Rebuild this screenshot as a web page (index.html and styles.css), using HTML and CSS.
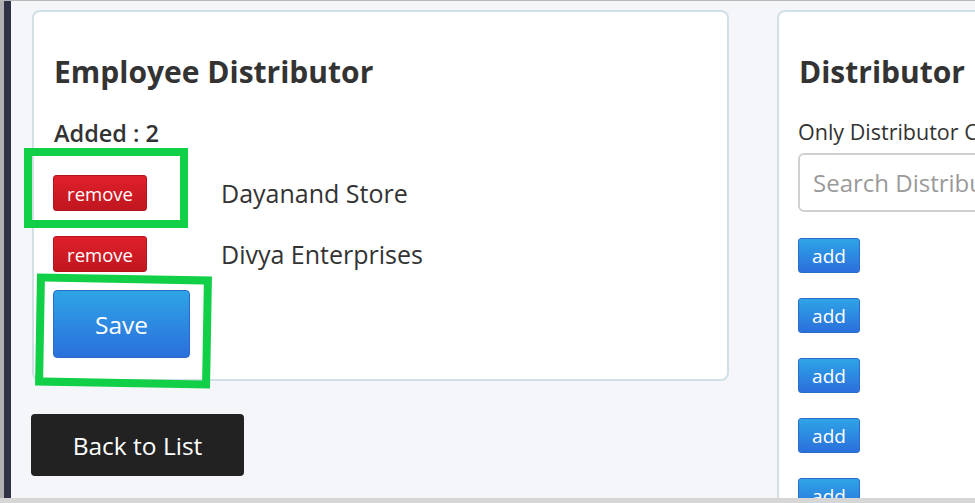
FILE: index.html
```html
<!DOCTYPE html>
<html>
<head>
<meta charset="utf-8">
<link rel="stylesheet" href="styles.css">
</head>
<body>
<div class="frame">
  <div class="rail-gray"></div>
  <div class="rail-dark"></div>
  <main class="main">
    <div class="col-left">
      <section class="card card-emp">
        <h2 class="title">Employee Distributor</h2>
        <div class="added">Added : 2</div>
        <div class="row">
          <button class="btn btn-remove">remove</button>
          <span class="name">Dayanand Store</span>
        </div>
        <div class="row">
          <button class="btn btn-remove">remove</button>
          <span class="name">Divya Enterprises</span>
        </div>
        <button class="btn btn-save">Save</button>
      </section>
      <button class="btn btn-back">Back to List</button>
    </div>
    <section class="card card-dist">
      <h2 class="title">Distributor</h2>
      <label class="label">Only Distributor Code</label>
      <input class="search" type="text" placeholder="Search Distributor">
      <div class="adds">
        <button class="btn btn-add">add</button>
        <button class="btn btn-add">add</button>
        <button class="btn btn-add">add</button>
        <button class="btn btn-add">add</button>
        <button class="btn btn-add">add</button>
      </div>
    </section>
  </main>
  <div class="mark mark-1"></div>
  <div class="mark mark-2"></div>
</div>
</body>
</html>
```

FILE: styles.css
```css
html, body {
  margin: 0;
  padding: 0;
  height: 100%;
  overflow: hidden;
}
body {
  background: #f5f6fa;
  font-family: "Open Sans", "Lato", sans-serif;
  color: #333;
}
.frame {
  position: relative;
  display: flex;
  height: 497px;
  border-top: 1px solid #b9b9b9;
  border-bottom: 5px solid #d6d6d6;
  overflow: hidden;
}
.rail-gray {
  width: 4px;
  background: #b1b1b1;
  flex: none;
}
.rail-dark {
  width: 7px;
  background: #2f3244;
  flex: none;
}
.main {
  display: flex;
  gap: 48px;
  padding: 9px 0 0 21px;
  flex: 1;
  min-width: 0;
}
.col-left {
  display: flex;
  flex-direction: column;
  align-items: flex-start;
  flex: none;
}
.card {
  background: #fff;
  border: 2px solid #d3dfe7;
  border-radius: 8px;
  box-sizing: border-box;
}
.card-emp {
  width: 697px;
  height: 371px;
  padding: 42px 20px 0 19px;
  display: flex;
  flex-direction: column;
  align-items: flex-start;
}
.card-dist {
  flex: none;
  width: 400px;
  height: 520px;
  padding: 42px 20px 0 19px;
  display: flex;
  flex-direction: column;
  align-items: flex-start;
}
.title {
  margin: 0 0 0 1px;
  font-size: 30px;
  font-weight: 700;
  line-height: 36px;
  color: #333;
}
.added {
  margin: 29px 0 0 1px;
  font-size: 23.5px;
  font-weight: 600;
  line-height: 28px;
}
.row {
  display: flex;
  align-items: center;
  height: 36px;
  margin-top: 28px;
}
.row + .row {
  margin-top: 25px;
}
.name {
  margin-left: 74px;
  font-size: 25px;
  color: #333;
}
.btn {
  border: 1px solid transparent;
  font-family: "Open Sans", "Lato", sans-serif;
  color: #fff;
  cursor: pointer;
  padding: 0;
  box-sizing: border-box;
}
.btn-remove {
  width: 94px;
  height: 36px;
  border-radius: 3px;
  font-size: 18.5px;
  background: linear-gradient(#e0202b, #c0161f);
  border-color: #b3141c;
}
.btn-save {
  margin-top: 18px;
  width: 137px;
  height: 68px;
  border-radius: 4px;
  font-size: 24.5px;
  background: linear-gradient(#2ea4e6, #2b6fdc);
  border-color: #2a6cc6;
}
.btn-back {
  margin-top: 33px;
  margin-left: -1px;
  width: 213px;
  height: 62px;
  border-radius: 4px;
  background: #222;
  font-size: 24.5px;
}
.label {
  margin-top: 29px;
  font-size: 21.5px;
  line-height: 26px;
  white-space: nowrap;
}
.search {
  margin-top: 8px;
  width: 400px;
  height: 59px;
  box-sizing: border-box;
  border: 2px solid #d0d0d0;
  border-radius: 6px;
  padding: 0 13px;
  font-family: "Open Sans", "Lato", sans-serif;
  font-size: 24px;
  color: #333;
}
.search::placeholder {
  color: #9a9a9a;
}
.adds {
  margin-top: 26px;
  display: flex;
  flex-direction: column;
  gap: 25px;
}
.btn-add {
  width: 62px;
  height: 35px;
  border-radius: 3px;
  font-size: 19px;
  background: linear-gradient(#2ea4e6, #2b6fdc);
  border-color: #2a6cc6;
}
.mark {
  position: absolute;
  border: 8px solid #11cf46;
  box-sizing: border-box;
}
.mark-1 {
  left: 24px;
  top: 147px;
  width: 164px;
  height: 80px;
}
.mark-2 {
  left: 36px;
  top: 274px;
  width: 175px;
  height: 112px;
  transform: rotate(1deg);
}
```
